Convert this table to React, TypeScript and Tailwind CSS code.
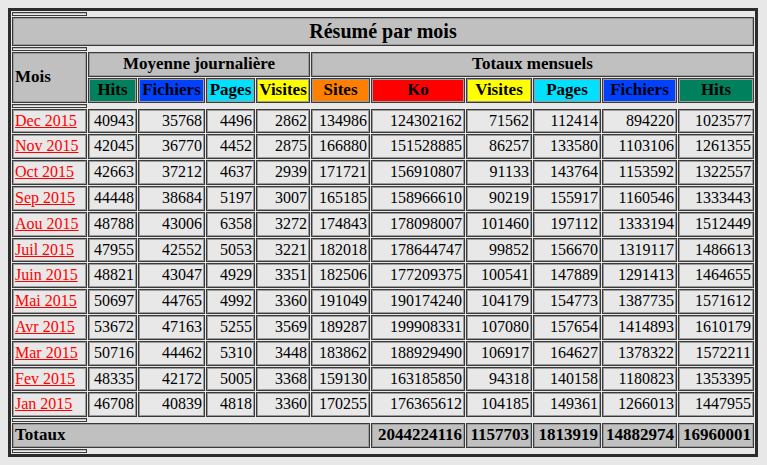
const months: [string, number[]][] = [
  ['Dec 2015', [40943, 35768, 4496, 2862, 134986, 124302162, 71562, 112414, 894220, 1023577]],
  ['Nov 2015', [42045, 36770, 4452, 2875, 166880, 151528885, 86257, 133580, 1103106, 1261355]],
  ['Oct 2015', [42663, 37212, 4637, 2939, 171721, 156910807, 91133, 143764, 1153592, 1322557]],
  ['Sep 2015', [44448, 38684, 5197, 3007, 165185, 158966610, 90219, 155917, 1160546, 1333443]],
  ['Aou 2015', [48788, 43006, 6358, 3272, 174843, 178098007, 101460, 197112, 1333194, 1512449]],
  ['Juil 2015', [47955, 42552, 5053, 3221, 182018, 178644747, 99852, 156670, 1319117, 1486613]],
  ['Juin 2015', [48821, 43047, 4929, 3351, 182506, 177209375, 100541, 147889, 1291413, 1464655]],
  ['Mai 2015', [50697, 44765, 4992, 3360, 191049, 190174240, 104179, 154773, 1387735, 1571612]],
  ['Avr 2015', [53672, 47163, 5255, 3569, 189287, 199908331, 107080, 157654, 1414893, 1610179]],
  ['Mar 2015', [50716, 44462, 5310, 3448, 183862, 188929490, 106917, 164627, 1378322, 1572211]],
  ['Fev 2015', [48335, 42172, 5005, 3368, 159130, 163185850, 94318, 140158, 1180823, 1353395]],
  ['Jan 2015', [46708, 40839, 4818, 3360, 170255, 176365612, 104185, 149361, 1266013, 1447955]]
];

const totals = [2044224116, 1157703, 1813919, 14882974, 16960001];

// webalizer colours
const headers = [
  { label: 'Hits', bg: 'bg-[#00805c]' },
  { label: 'Fichiers', bg: 'bg-[#0040ff]' },
  { label: 'Pages', bg: 'bg-[#00e0ff]' },
  { label: 'Visites', bg: 'bg-[#ffff00]' },
  { label: 'Sites', bg: 'bg-[#ff8000]' },
  { label: 'Ko', bg: 'bg-[#ff0000]' },
  { label: 'Visites', bg: 'bg-[#ffff00]' },
  { label: 'Pages', bg: 'bg-[#00e0ff]' },
  { label: 'Fichiers', bg: 'bg-[#0040ff]' },
  { label: 'Hits', bg: 'bg-[#00805c]' }
];

const serif = "font-['Liberation_Serif','Times_New_Roman',serif]";
const box = `${serif} leading-[18.8px] border border-[#3a3a3a] px-[2px] py-[2px] shadow-[inset_0_0_0_1px_#9c9c9c]`;
const cell = `${box} text-[16px]`;
const head = `${box} text-[17px] font-bold`;

function Spacer() {
  return (
    <tr>
      <th className="h-[4px] p-0 border border-[#3a3a3a] bg-[#ececec] shadow-[inset_0_1px_0_#bdbdbd]"></th>
    </tr>
  );
}

export default function App() {
  return (
    <div className={`min-h-screen bg-[#e8e8e8] p-2 text-black ${serif}`}>
      <table className={`${serif} table-fixed w-[750px] border-separate border-spacing-[1px] border-[3px] border-[#2c2c2c] bg-[#e8e8e8]`}>
        <colgroup>
          <col className="w-[75px]" />
          <col className="w-[49px]" />
          <col className="w-[67px]" />
          <col className="w-[49px]" />
          <col className="w-[54px]" />
          <col className="w-[59px]" />
          <col className="w-[94px]" />
          <col className="w-[66px]" />
          <col className="w-[68px]" />
          <col className="w-[75px]" />
          <col className="w-[76px]" />
        </colgroup>
        <tbody>
          <Spacer />
          <tr>
            <th colSpan={11} className={`${box} bg-[#c0c0c0] text-center text-[20px] !leading-[23px] font-bold`}>
              Résumé par mois
            </th>
          </tr>
          <Spacer />
          <tr>
            <th rowSpan={2} className={`${head} bg-[#c0c0c0] text-left`}>
              Mois
            </th>
            <th colSpan={4} className={`${head} bg-[#c0c0c0] text-center`}>
              Moyenne journalière
            </th>
            <th colSpan={6} className={`${head} bg-[#c0c0c0] text-center`}>
              Totaux mensuels
            </th>
          </tr>
          <tr>
            {headers.map((h, i) => (
              <th key={i} className={`${head} ${h.bg} text-center`}>
                {h.label}
              </th>
            ))}
          </tr>
          <Spacer />
          {months.map(([name, vals]) => (
            <tr key={name}>
              <td className={`${cell} text-left whitespace-nowrap`}>
                <a href="#" className="text-[#ff0000] underline">
                  {name}
                </a>
              </td>
              {vals.map((v, i) => (
                <td key={i} className={`${cell} text-right`}>
                  {v}
                </td>
              ))}
            </tr>
          ))}
          <Spacer />
          <tr>
            <th colSpan={6} className={`${head} bg-[#c0c0c0] text-left`}>
              Totaux
            </th>
            {totals.map((t, i) => (
              <th key={i} className={`${head} bg-[#c0c0c0] text-right`}>
                {t}
              </th>
            ))}
          </tr>
          <Spacer />
        </tbody>
      </table>
    </div>
  );
}
